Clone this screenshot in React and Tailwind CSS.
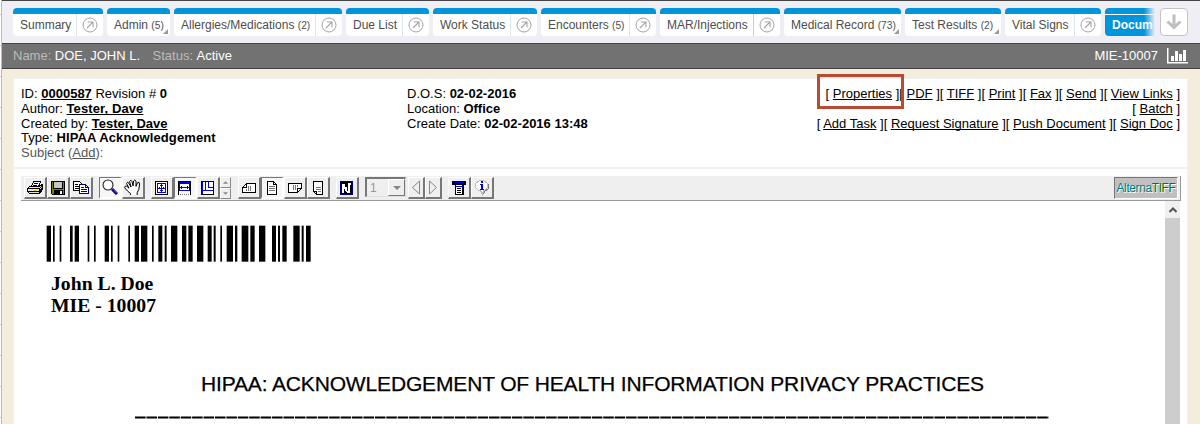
import React from "react";

const tabs = [
  { label: "Summary", width: "w-[90px]", link: true },
  { label: "Admin", count: 5, width: "w-[63px]" },
  { label: "Allergies/Medications", count: 2, width: "w-[168px]", link: true },
  { label: "Due List", width: "w-[83px]", link: true },
  { label: "Work Status", width: "w-[104px]", link: true },
  { label: "Encounters", count: 5, width: "w-[115px]", link: true },
  { label: "MAR/Injections", width: "w-[120px]", link: true, bright: true },
  { label: "Medical Record", count: 73, width: "w-[117px]" },
  { label: "Test Results", count: 2, width: "w-[96px]" },
  { label: "Vital Signs", width: "w-[96px]", link: true },
];

function Tab({ label, count, width, link, bright }) {
  return (
    <div className={`relative h-7 shrink-0 overflow-hidden rounded-[4px] border-t-[6px] border-[#0095db] bg-white ${width}`}>
      <div className="flex h-full">
        <div className="flex-1 whitespace-nowrap pl-[7px] text-[12px] leading-[22px] text-[#4d4d4d]">
          {label}
          {count !== undefined && <span className="ml-[0.5px] text-[10.2px]"> ({count})</span>}
        </div>
        {link && (
          <div className={`flex w-[27px] items-center justify-center border-l ${bright ? "border-[#a5d8f0]" : "border-[#dbe6ee]"}`}>
            <svg width="16" height="16" viewBox="0 0 16 16" fill="none" stroke="#a3a3a3" className="-mt-[1px]">
              <circle cx="8" cy="8" r="7" strokeWidth="1" />
              <path d="M5 11L10.6 5.4M5.8 5H11V10.2" strokeWidth="1.1" />
            </svg>
          </div>
        )}
      </div>
      {!link && (
        <svg className="absolute bottom-[2px] right-[2px]" width="5" height="5" viewBox="0 0 5 5">
          <path d="M5 0V5H0Z" fill="#999" />
        </svg>
      )}
    </div>
  );
}

function Tool({ children, pressed, width = "w-[23px]" }) {
  const look = pressed
    ? "border-t-[#777] border-l-[#777] border-b-white border-r-white bg-[#f7f7f7]"
    : "border-t-white border-l-white border-b-[#777] border-r-[#777] bg-[#efefef]";
  return (
    <div className={`flex h-[22px] shrink-0 items-start justify-center border border-b-2 border-r-2 pt-[2px] ${look} ${width}`}>
      {children}
    </div>
  );
}

function Icon({ children }) {
  return (
    <svg width="16" height="16" viewBox="0 0 16 16" fill="none" stroke="#000" strokeWidth="1" shapeRendering="crispEdges" className="shrink-0">
      {children}
    </svg>
  );
}

const PrinterIcon = () => (
  <Icon>
    <path d="M4.5 6.5L6.5 1.5H13.5L11.5 6.5" fill="#fff" />
    <path d="M7 3.5H11M6 5.5H10" />
    <path d="M2.5 6.5H11.5L15.5 4.5V9.5L12.5 13.5H2.5L0.5 11.5V8.5Z" fill="#e4e4e4" />
    <path d="M1 8.5H12.5L15 6M1 11.5H12.5L15 8.5M12.5 9V13" />
    <path d="M7 10.5H10" stroke="#e5d900" />
  </Icon>
);
const SaveIcon = () => (
  <Icon>
    <path d="M1.5 1.5H14.5V14.5H2.5L1.5 13.5Z" fill="#808000" />
    <path d="M4 2H12V8H4Z" fill="#c6c6c6" stroke="none" />
    <path d="M4 10H13V15H4Z" fill="#000" stroke="none" />
    <path d="M10 11H12V14H10Z" fill="#fff" stroke="none" />
    <path d="M3.5 1V8.5H12.5V1" />
  </Icon>
);
const CopyIcon = () => (
  <Icon>
    <path d="M0.5 1.5H6.5L9.5 4.5V10.5H0.5Z" fill="#fff" />
    <path d="M2 4.5H5M2 6.5H7M2 8.5H6" />
    <path d="M6.5 4.5H12.5L15.5 7.5V13.5H6.5Z" fill="#fff" stroke="#000080" />
    <path d="M12.5 5V7.5H15M8 7.5H11M8 9.5H14M8 11.5H14" stroke="#000080" />
  </Icon>
);
const ZoomIcon = () => (
  <svg width="16" height="16" viewBox="0 0 16 16" fill="none" className="-mt-px shrink-0">
    <circle cx="6" cy="6" r="5" fill="#fff" stroke="#222" strokeWidth="1.1" />
    <path d="M10 10L15 15" stroke="#000080" strokeWidth="3" />
    <path d="M11 10.3L14.7 14" stroke="#8080d8" strokeWidth="0.8" />
  </svg>
);
const HandIcon = () => (
  <svg width="18" height="17" viewBox="0 0 18 17" fill="none" stroke="#000" className="-mt-px shrink-0">
    <path
      d="M6.5 16V14.5L3.5 12L0.7 8.8L1.3 7.2H2.8L5 9.2L2.6 4.6L3.6 3.2L5 4.4L7 8L5.6 2.4L6.8 1.2L8 2.4L9 7L9.6 2L10.8 1L12 2.2V7.4L13.6 3.6L15 3.4L15.6 5L14.8 10.5L13.2 13.5V16"
      fill="#fff"
    />
  </svg>
);
const FitPageIcon = () => (
  <Icon>
    <rect x="1.5" y="1.5" width="12" height="13" fill="#fff" />
    <rect x="3.5" y="3.5" width="8" height="9" stroke="#0000e0" />
    <path d="M7.5 3V13M3 8H12" stroke="#0000e0" />
    <path d="M6 5.5H9M6 10.5H9M5.5 7V9M9.5 7V9" stroke="#0000e0" />
  </Icon>
);
const FitWidthIcon = () => (
  <Icon>
    <path d="M1.5 14.5V1.5H13.5V14.5" fill="#fff" />
    <path d="M2 3H13" stroke="#0000e0" strokeWidth="2" />
    <path d="M2.5 4V11M12.5 4V11M2 10.5H13M3 7.5H12M4.5 6V9M10.5 6V9" stroke="#0000e0" />
    <path d="M3 14.5H13" strokeDasharray="1 1" stroke="#777" />
  </Icon>
);
const FitCornerIcon = () => (
  <Icon>
    <rect x="1.5" y="1.5" width="12" height="13" fill="#fff" />
    <path d="M5.5 2V10.5H13M8.5 2V7.5H13M2.5 2V14" stroke="#0000e0" />
    <path d="M5 10.5H2" stroke="#0000e0" />
  </Icon>
);
const PageLeftIcon = () => (
  <Icon>
    <path d="M1.5 12.5V7.5L5.5 3.5H14.5V12.5Z" fill="#fff" />
    <path d="M5.5 4V7.5H2" />
    <path d="M5.5 9V11M7.5 6V11M9.5 6V11" stroke="#777" />
  </Icon>
);
const PageUpIcon = () => (
  <Icon>
    <path d="M3.5 1.5H9.5L12.5 4.5V14.5H3.5Z" fill="#fff" />
    <path d="M9.5 2V4.5H12" />
    <path d="M5 6.5H11M5 8.5H11M5 10.5H11" stroke="#777" />
  </Icon>
);
const PageRightIcon = () => (
  <Icon>
    <path d="M1.5 3.5H14.5V8.5L10.5 12.5H1.5Z" fill="#fff" />
    <path d="M10.5 12V8.5H14" />
    <path d="M6.5 5V10M8.5 5V10M10.5 5V7" stroke="#777" />
  </Icon>
);
const PageDownIcon = () => (
  <Icon>
    <path d="M3.5 1.5H12.5V14.5H6.5L3.5 11.5Z" fill="#fff" />
    <path d="M6.5 14V11.5H4" />
    <path d="M6 7.5H11M6 9.5H11M8 11.5H11" stroke="#777" />
  </Icon>
);
const InvertIcon = () => (
  <Icon>
    <rect x="1.5" y="1.5" width="12" height="13" fill="#000" stroke="#000080" />
    <path d="M3 13V4H6L9 9V3H12V5H11V13H8L5 8V13Z" fill="#fff" stroke="none" />
    <path d="M6.5 5V7M8.5 8V11" />
  </Icon>
);
const MenuIcon = () => (
  <Icon>
    <rect x="1" y="1" width="14" height="4" fill="#000" stroke="none" />
    <path d="M3 2.5H13" stroke="#0000e0" />
    <rect x="4.5" y="4.5" width="7" height="10" fill="#fff" />
    <path d="M12.5 5V15M6 8.5H10M6 10.5H10M6 12.5H10" />
    <path d="M4 6.5H12" stroke="#0000e0" />
  </Icon>
);
const InfoIcon = () => (
  <Icon>
    <path d="M5.5 0.5H9.5L13.5 3.5V7.5L10.5 10.5H9.5L8.5 14.5L6.5 10.5H4.5L1.5 7.5V3.5Z" fill="#fff" stroke="#bbb" />
    <path d="M14.5 4V8.5L10.5 11.5L9.5 14.5" stroke="#777" />
    <path d="M7 1H9V3H7ZM6 4H9V9H10V10H6V9H7V5H6Z" fill="#0000e8" stroke="none" />
  </Icon>
);

const bars = [
  [50, 13], [69, 5], [89, 5], [120, 8], [134, 13], [173, 5], [192, 5], [224, 13], [243, 5], [263, 5], [295, 5],
  [314, 13], [333, 19], [366, 5], [385, 12], [404, 6], [423, 19], [456, 13], [475, 13], [501, 19], [533, 12],
  [551, 6], [571, 5], [590, 19], [615, 7], [635, 20], [661, 13], [687, 19], [726, 12], [744, 6], [757, 13],
  [790, 19], [815, 6], [828, 14],
];

function Actions({ items }) {
  return (
    <div>
      {items.map((item) => (
        <span key={item}>
          [ <span className="underline">{item}</span> ]
        </span>
      ))}
    </div>
  );
}

export default function App() {
  return (
    <div className="flex h-[424px] w-[1200px] overflow-hidden bg-white font-['Liberation_Sans',Arial,sans-serif] [text-decoration-skip-ink:none]">
      <div className="flex w-[2px] shrink-0 flex-col gap-[30px] border-r border-[#bcbcbc] pt-[14px]">
        {[...Array(14)].map((_, i) => (
          <div key={i} className="h-px shrink-0 bg-[#ccc]" />
        ))}
      </div>
      <div className="flex min-w-0 flex-1 flex-col border-t border-[#444] bg-[#f4ecdc]">
        <div className="flex h-[42px] shrink-0 gap-1 bg-[#efeef4] pl-[11px] pt-[7px]">
          {tabs.map((tab) => (
            <Tab key={tab.label} {...tab} />
          ))}
          <div className="relative h-7 w-[50px] shrink-0 overflow-hidden rounded-l-[4px] bg-[#0095db]">
            <div className="mt-[6px] h-px bg-white" />
            <div className="whitespace-nowrap pl-[7px] text-[12px] font-bold leading-[20px] text-white">Docum</div>
            <div className="absolute inset-y-0 right-0 w-[11px] bg-linear-to-r from-[#efeef4]/0 to-[#efeef4]" />
          </div>
          <div className="ml-[1px] flex h-7 w-7 shrink-0 items-center justify-center rounded-[4px] border border-[#c4c4c4] bg-white">
            <svg width="18" height="18" viewBox="0 0 18 18" fill="none" stroke="#bebebe" strokeWidth="3" className="-mt-px">
              <path d="M9 1.5V15M2.5 8.5L9 14.5L15.5 8.5" />
            </svg>
          </div>
        </div>
        <div className="flex h-[26px] shrink-0 items-center border-y border-[#444] bg-[#727272] pl-[11px] pr-[12px] text-[13px] text-white">
          <span className="text-[#bbb]">Name:</span>
          <span className="ml-[3.5px]">DOE, JOHN L.</span>
          <span className="ml-[12.5px] text-[#bbb]">Status:</span>
          <span className="ml-[3.5px]">Active</span>
          <span className="ml-auto mr-[9px]">MIE-10007</span>
          <svg width="21" height="16" viewBox="0 0 21 16" fill="#fff">
            <path d="M0 0H1.5V14H21V15.5H0ZM4 8H7V13H4ZM8 3H11V13H8ZM12 6H15V13H12ZM16 2H19V13H16Z" />
          </svg>
        </div>
        <div className="ml-[11px] mt-[9px] flex w-[1175px] flex-1 flex-col border-x border-t border-[#f1f1f1] bg-white">
          <div className="flex h-[90px] shrink-0 border-b-2 border-[#f1f1f1] pl-[7px] pr-[7px] pt-[8px] text-[13px] leading-[14.8px] text-black">
            <div className="w-[386px]">
              <div>ID: <b className="underline">0000587</b> Revision # <b>0</b></div>
              <div>Author: <b className="tracking-[0.1px] underline">Tester, Dave</b></div>
              <div>Created by: <b className="underline">Tester, Dave</b></div>
              <div>Type: <b className="tracking-[0.11px]">HIPAA Acknowledgement</b></div>
              <div className="text-[#555]">Subject (<span className="underline">Add</span>):</div>
            </div>
            <div>
              <div>D.O.S: <b>02-02-2016</b></div>
              <div>Location: <b>Office</b></div>
              <div>Create Date: <b>02-02-2016 13:48</b></div>
            </div>
            <div className="relative ml-auto whitespace-nowrap text-right">
              <Actions items={["Properties", "PDF", "TIFF", "Print", "Fax", "Send", "View Links"]} />
              <Actions items={["Batch"]} />
              <Actions items={["Add Task", "Request Signature", "Push Document", "Sign Doc"]} />
              <div className="absolute right-[276px] top-[-13px] h-[35px] w-[87px] border-[3px] border-[#bb4a34]" />
            </div>
          </div>
          <div className="ml-[7px] mt-[7px] flex h-[25px] w-[1160px] shrink-0 border-b border-r border-[#999] bg-[#efefef] pl-[3px] pr-[2px] pt-[1px]">
            <Tool><PrinterIcon /></Tool>
            <Tool><SaveIcon /></Tool>
            <Tool><CopyIcon /></Tool>
            <div className="w-[6px]" />
            <Tool pressed><ZoomIcon /></Tool>
            <Tool><HandIcon /></Tool>
            <div className="w-[6px]" />
            <Tool><FitPageIcon /></Tool>
            <Tool pressed><FitWidthIcon /></Tool>
            <Tool><FitCornerIcon /></Tool>
            <div className="flex flex-col">
              {["M0 3L2 1L4 3Z", "M0 1L2 3L4 1Z"].map((d) => (
                <div key={d} className="flex h-[11px] w-[11px] items-center justify-center border border-b-[#888] border-l-white border-r-[#888] border-t-white">
                  <svg width="5" height="5" viewBox="0 0 4 4"><path d={d} fill="#888" /></svg>
                </div>
              ))}
            </div>
            <div className="w-[7px]" />
            <Tool><PageLeftIcon /></Tool>
            <Tool pressed><PageUpIcon /></Tool>
            <Tool><PageRightIcon /></Tool>
            <Tool><PageDownIcon /></Tool>
            <div className="w-[6px]" />
            <Tool><InvertIcon /></Tool>
            <div className="ml-[6px] flex h-[20px] w-[41px] justify-between border border-l-2 border-t-2 border-[#ddd] border-l-[#777] border-t-[#777] pl-[3px] text-[12px] leading-[18px] text-[#b08aa2]">
              1
              <div className="flex h-[17px] w-[17px] items-center justify-center border border-b-[#777] border-l-white border-r-[#777] border-t-white">
                <svg width="8" height="4" viewBox="0 0 8 4"><path d="M0 0H8L4 4Z" fill="#888" /></svg>
              </div>
            </div>
            <div className="w-[2px]" />
            <Tool width="w-[17px]">
              <svg width="10" height="15" viewBox="0 0 10 15" fill="none" stroke="#888"><path d="M8.5 1V14L1.5 7.5Z" /></svg>
            </Tool>
            <Tool width="w-[17px]">
              <svg width="10" height="15" viewBox="0 0 10 15" fill="none" stroke="#888"><path d="M1.5 1V14L8.5 7.5Z" /></svg>
            </Tool>
            <div className="w-[6px]" />
            <Tool><MenuIcon /></Tool>
            <Tool><InfoIcon /></Tool>
            <div className="ml-auto flex h-[22px] w-[64px] items-center justify-center border border-b-white border-l-[#777] border-r-white border-t-[#777] bg-[#c0c0c0] text-[12px] tracking-[-0.4px] text-[#008080] [text-shadow:1px_1px_0_#fff]">
              Alterna<span className="text-[#008000]">TIFF</span>
            </div>
          </div>
          <div className="ml-[7px] flex w-[1159px] flex-1">
            <div className="flex-1 pt-[24px]">
              <svg className="ml-[9px] block" width="300" height="38" viewBox="0 0 900 114">
                {bars.map(([x, w]) => (
                  <rect key={x} x={x} y="2" width={w} height="108" fill="#000" />
                ))}
              </svg>
              <div className="ml-[30px] mt-[10px] font-['Liberation_Serif',serif] text-[19.7px] font-bold leading-[21.5px] text-black">
                <div>John L. Doe</div>
                <div>MIE - 10007</div>
              </div>
              <div className="ml-[180px] mt-[56px] whitespace-nowrap text-[21px] leading-[24px] tracking-[-0.15px] text-black [-webkit-text-stroke:0.25px_#000]">
                HIPAA: ACKNOWLEDGEMENT OF HEALTH INFORMATION PRIVACY PRACTICES
              </div>
              <svg className="ml-[114px] mt-[20px] block" width="914" height="3" viewBox="0 0 914 3">
                <path d="M0 1.5H914" stroke="#000" strokeWidth="2" strokeDasharray="10.6 0.82" />
              </svg>
            </div>
            <div className="flex w-[15px] flex-col bg-[#cdcdcd]">
              <div className="flex h-[17px] items-center justify-center bg-[#f0f0f0]">
                <svg width="8" height="6" viewBox="0 0 8 6" fill="none" stroke="#555" strokeWidth="2"><path d="M0.5 5L4 1.5L7.5 5" /></svg>
              </div>
            </div>
          </div>
        </div>
      </div>
    </div>
  );
}
